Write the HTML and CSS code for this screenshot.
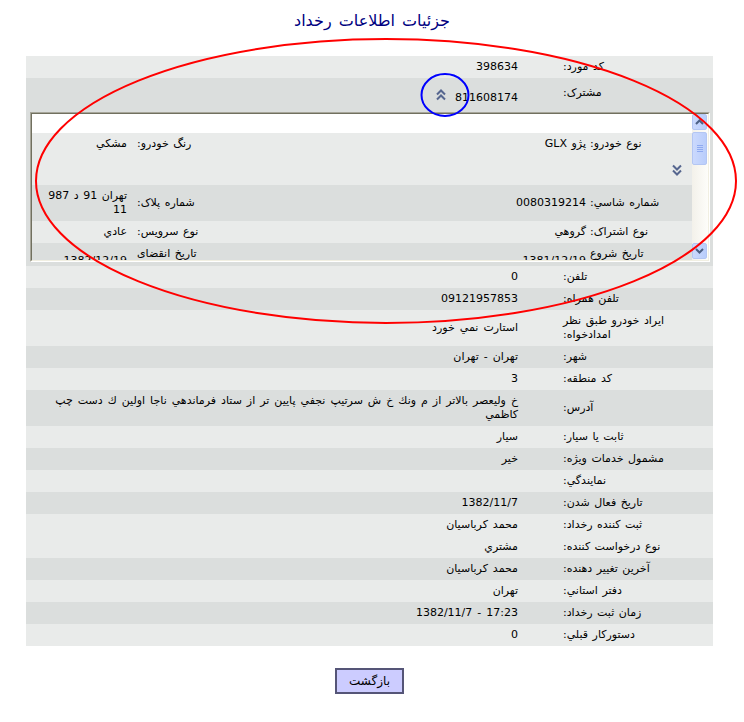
FILE: index.html
```html
<!DOCTYPE html>
<html lang="fa">
<head>
<meta charset="utf-8">
<title>جزئيات اطلاعات رخداد</title>
<link rel="stylesheet" href="styles.css">
</head>
<body>
<div class="page">
  <h1 class="title">جزئيات اطلاعات رخداد</h1>

  <div class="details">
    <div class="row light"><div class="lbl">کد مورد:</div><div class="val">398634</div></div>

    <div class="row-block dark">
      <div class="row"><div class="lbl lbl-sub">مشترک:</div><div class="val val-sub"><span>811608174</span><svg class="chev" width="10" height="12" viewBox="0 0 10 12"><polyline points="1,5.5 5,1.5 9,5.5"/><polyline points="1,10.5 5,6.5 9,10.5"/></svg></div></div>
      <div class="frame">
        <div class="frame-in">
          <div class="frame-content">
            <div class="irow light">
              <div class="il">نوع خودرو:</div><div class="iv">پژو GLX</div>
              <div class="il">رنگ خودرو:</div><div class="iv">مشكي</div>
            </div>
            <div class="irow-more light">
              <svg class="chev" width="10" height="12" viewBox="0 0 10 12"><polyline points="1,1.5 5,5.5 9,1.5"/><polyline points="1,6.5 5,10.5 9,6.5"/></svg>
            </div>
            <div class="irow dark">
              <div class="il">شماره شاسي:</div><div class="iv">0080319214</div>
              <div class="il">شماره پلاک:</div><div class="iv">تهران 91 د 987 11</div>
            </div>
            <div class="irow light">
              <div class="il">نوع اشتراک:</div><div class="iv">گروهي</div>
              <div class="il">نوع سرويس:</div><div class="iv">عادي</div>
            </div>
            <div class="irow dark">
              <div class="il">تاريخ شروع<br>اشتراک:</div><div class="iv">1381/12/19</div>
              <div class="il">تاريخ انقضای<br>اشتراک:</div><div class="iv">1382/12/19</div>
            </div>
          </div>
          <div class="scrollbar">
            <div class="sb-btn"><svg width="9" height="6" viewBox="0 0 9 6"><polyline points="1,5 4.5,1.5 8,5"/></svg></div>
            <div class="sb-thumb"><span></span><span></span><span></span><span></span></div>
            <div class="sb-track"></div>
            <div class="sb-btn"><svg width="9" height="6" viewBox="0 0 9 6"><polyline points="1,1 4.5,4.5 8,1"/></svg></div>
          </div>
        </div>
      </div>
    </div>

    <div class="row light"><div class="lbl">تلفن:</div><div class="val">0</div></div>
    <div class="row dark"><div class="lbl">تلفن همراه:</div><div class="val">09121957853</div></div>
    <div class="row light"><div class="lbl">ایراد خودرو طبق نظر امدادخواه:</div><div class="val">استارت نمي خورد</div></div>
    <div class="row dark"><div class="lbl">شهر:</div><div class="val">تهران - تهران</div></div>
    <div class="row light"><div class="lbl">کد منطقه:</div><div class="val">3</div></div>
    <div class="row dark"><div class="lbl">آدرس:</div><div class="val">خ وليعصر بالاتر از م ونك خ ش سرتيپ نجفي پايين تر از ستاد فرماندهي ناجا اولين ك دست چپ كاظمي</div></div>
    <div class="row light"><div class="lbl">ثابت یا سیار:</div><div class="val">سيار</div></div>
    <div class="row dark"><div class="lbl">مشمول خدمات ویژه:</div><div class="val">خير</div></div>
    <div class="row light"><div class="lbl">نمایندگي:</div><div class="val"></div></div>
    <div class="row dark"><div class="lbl">تاریخ فعال شدن:</div><div class="val">1382/11/7</div></div>
    <div class="row light"><div class="lbl">ثبت کننده رخداد:</div><div class="val">محمد کرباسیان</div></div>
    <div class="row light"><div class="lbl">نوع درخواست کننده:</div><div class="val">مشتري</div></div>
    <div class="row dark"><div class="lbl">آخرین تغییر دهنده:</div><div class="val">محمد کرباسیان</div></div>
    <div class="row light"><div class="lbl">دفتر استاني:</div><div class="val">تهران</div></div>
    <div class="row dark"><div class="lbl">زمان ثبت رخداد:</div><div class="val">17:23 - 1382/11/7</div></div>
    <div class="row light"><div class="lbl">دستورکار قبلي:</div><div class="val">0</div></div>
  </div>

  <div class="actions"><button class="back" type="button">بازگشت</button></div>

  <svg class="annot" width="744" height="722" viewBox="0 0 744 722">
    <ellipse class="annot-red" cx="386" cy="181" rx="350" ry="142"/>
    <ellipse class="annot-blue" cx="445" cy="95" rx="23.5" ry="21"/>
  </svg>
</div>
</body>
</html>
```

FILE: styles.css
```css
html, body {
  margin: 0;
  padding: 0;
  background: #ffffff;
}

.page {
  position: relative;
  width: 744px;
  min-height: 722px;
  font-family: "DejaVu Sans", sans-serif;
  font-size: 11px;
  line-height: 14px;
  color: #000000;
}

.title {
  margin: 0;
  padding-top: 11px;
  height: 56px;
  box-sizing: border-box;
  text-align: center;
  font-size: 16px;
  line-height: 20px;
  font-weight: normal;
  color: #000080;
  direction: rtl;
  word-spacing: 2px;
}

.details {
  margin-left: 26px;
  width: 687px;
}

.light { background: #e9ebea; }
.dark  { background: #dbdedd; }

.row {
  display: grid;
  direction: rtl;
  grid-template-columns: 173px 514px;
  align-items: center;
}

.lbl {
  direction: rtl;
  text-align: left;
  padding: 4px 18px 4px 23px;
  word-spacing: 1px;
}

.val {
  direction: rtl;
  text-align: right;
  padding: 4px 22px 4px 6px;
  word-spacing: 1.5px;
}

.row-block {
  padding-bottom: 4px;
}

.row-block .row {
  height: 34px;
}

.lbl-sub { padding-top: 2px; padding-bottom: 6px; }

.val-sub {
  display: flex;
  align-items: center;
  padding-top: 7px;
  padding-bottom: 1px;
}

.val-sub .chev { margin-right: 9px; margin-top: -6px; }

.chev polyline {
  fill: none;
  stroke: #56668f;
  stroke-width: 2;
}

/* embedded frame */
.frame {
  margin: 0 3px 0 4px;
  height: 150px;
  box-sizing: border-box;
  border-style: solid;
  border-width: 1px;
  border-color: #a7a69a #ffffff #ffffff #a7a69a;
}

.frame-in {
  height: 148px;
  box-sizing: border-box;
  border-style: solid;
  border-width: 1px;
  border-color: #71705f #f1efe2 #f1efe2 #71705f;
  display: flex;
  overflow: hidden;
}

.frame-content {
  flex: 1;
  background: #ffffff;
  padding-top: 19px;
  overflow: hidden;
}

.irow {
  display: grid;
  direction: rtl;
  grid-template-columns: 104px 378px 78px 100px;
  align-items: center;
  min-height: 22px;
}

.il {
  direction: rtl;
  text-align: left;
  padding: 4px 2px;
  word-spacing: 1px;
}

.iv {
  direction: rtl;
  text-align: right;
  padding: 4px 2px 4px 2px;
  word-spacing: 1px;
}

.irow > .il:nth-child(3) { padding-left: 5px; }
.irow > .iv:nth-child(4) { padding-right: 5px; padding-left: 8px; }

.irow-more {
  height: 30px;
  direction: rtl;
  display: flex;
  align-items: center;
  padding-right: 10px;
}

/* fake XP scrollbar */
.scrollbar {
  width: 16px;
  display: flex;
  flex-direction: column;
  background: linear-gradient(to right, #f3f1ea, #fdfdfa);
}

.sb-btn,
.sb-thumb {
  margin: 0 1px 0 0;
  box-sizing: border-box;
  border: 1px solid #b3c6f3;
  border-radius: 2px;
  background: linear-gradient(to right, #cbd9fd, #b9cdfb);
  display: flex;
  align-items: center;
  justify-content: center;
}

.sb-btn { height: 16px; }
.sb-btn:last-child { margin-bottom: 1px; }

.sb-btn polyline {
  fill: none;
  stroke: #4d6185;
  stroke-width: 2;
}

.sb-thumb {
  height: 33px;
  margin-top: 2px;
  flex-direction: column;
  gap: 1px;
}

.sb-thumb span {
  display: block;
  width: 6px;
  height: 1px;
  background: #8faaf0;
}

.sb-track { flex: 1; }

/* button */
.actions {
  padding-top: 22px;
  text-align: center;
}

.back {
  width: 69px;
  height: 26px;
  margin-left: -5px;
  padding: 0;
  border: 2px solid #555577;
  background: #ccccff;
  font-family: "DejaVu Sans", sans-serif;
  font-size: 12px;
  color: #000000;
  direction: rtl;
}

/* annotations drawn over the screenshot */
.annot {
  position: absolute;
  left: 0;
  top: 0;
  pointer-events: none;
}

.annot ellipse { fill: none; stroke-width: 2; }
.annot-red { stroke: #ff0000; }
.annot-blue { stroke: #0000ff; }
```
